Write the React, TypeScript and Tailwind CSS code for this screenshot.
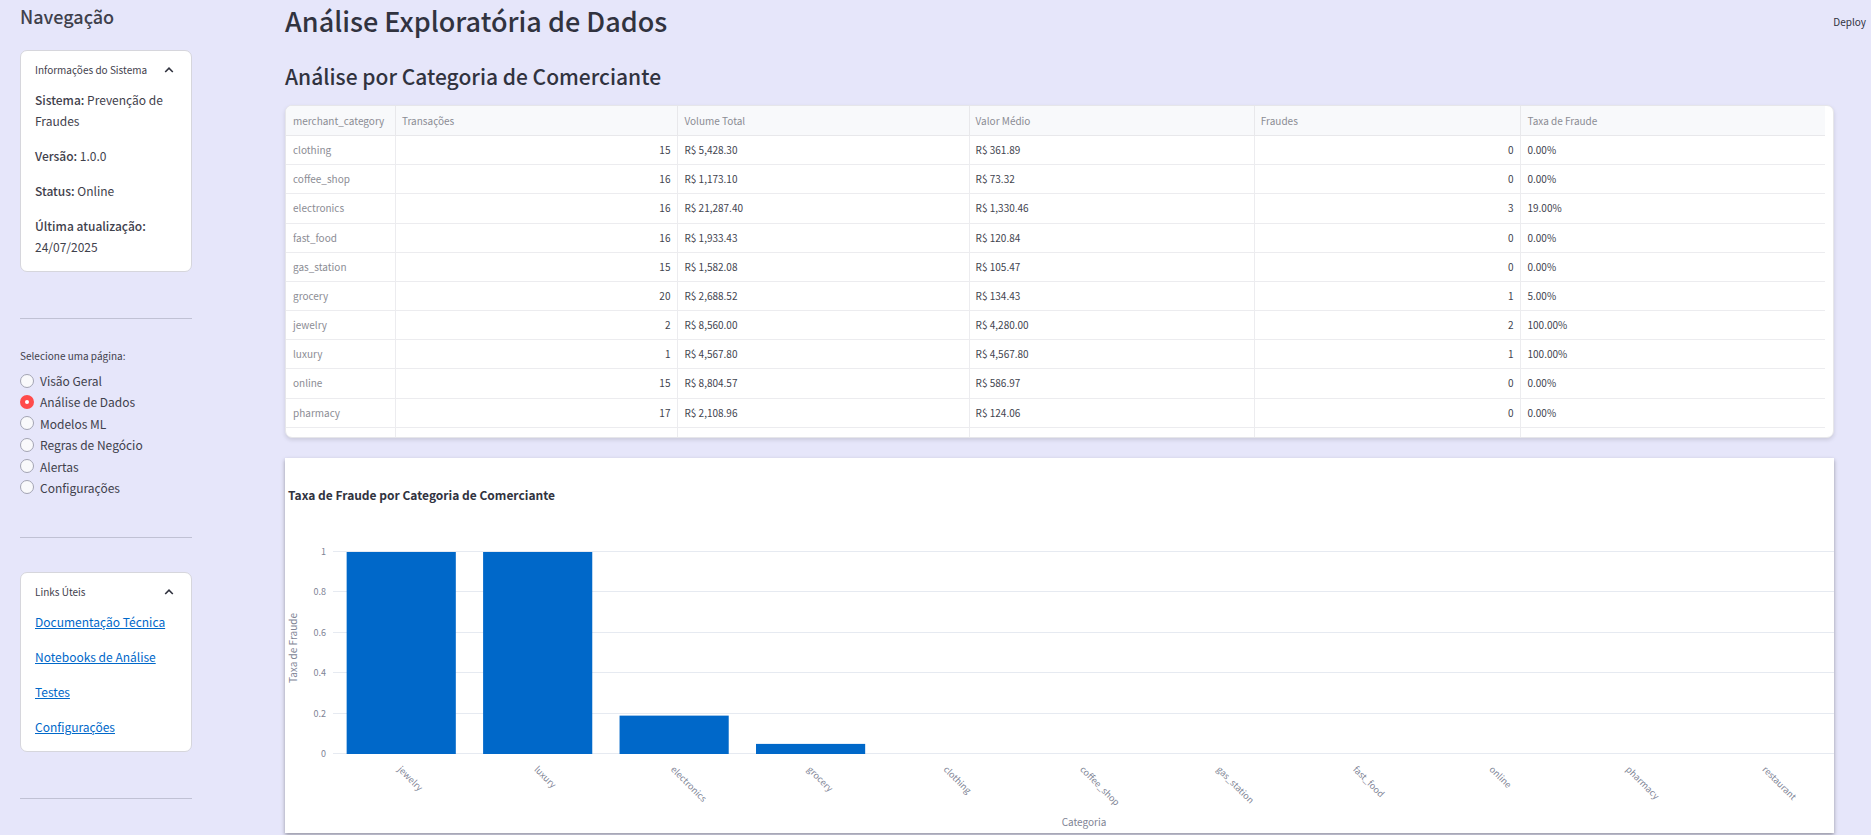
import { useState } from "react";
import type { ReactNode } from "react";

type MerchantRow = [string, number, string, string, number, string];

const columns = ["merchant_category", "Transações", "Volume Total", "Valor Médio", "Fraudes", "Taxa de Fraude"];

const rows: MerchantRow[] = [
  ["clothing", 15, "R$ 5,428.30", "R$ 361.89", 0, "0.00%"],
  ["coffee_shop", 16, "R$ 1,173.10", "R$ 73.32", 0, "0.00%"],
  ["electronics", 16, "R$ 21,287.40", "R$ 1,330.46", 3, "19.00%"],
  ["fast_food", 16, "R$ 1,933.43", "R$ 120.84", 0, "0.00%"],
  ["gas_station", 15, "R$ 1,582.08", "R$ 105.47", 0, "0.00%"],
  ["grocery", 20, "R$ 2,688.52", "R$ 134.43", 1, "5.00%"],
  ["jewelry", 2, "R$ 8,560.00", "R$ 4,280.00", 2, "100.00%"],
  ["luxury", 1, "R$ 4,567.80", "R$ 4,567.80", 1, "100.00%"],
  ["online", 15, "R$ 8,804.57", "R$ 586.97", 0, "0.00%"],
  ["pharmacy", 17, "R$ 2,108.96", "R$ 124.06", 0, "0.00%"],
];

const pages = ["Visão Geral", "Análise de Dados", "Modelos ML", "Regras de Negócio", "Alertas", "Configurações"];

const links = ["Documentação Técnica", "Notebooks de Análise", "Testes", "Configurações"];

const fraudRates: [string, number][] = [
  ["jewelry", 1],
  ["luxury", 1],
  ["electronics", 0.19],
  ["grocery", 0.05],
  ["clothing", 0],
  ["coffee_shop", 0],
  ["gas_station", 0],
  ["fast_food", 0],
  ["online", 0],
  ["pharmacy", 0],
  ["restaurant", 0],
];

function Expander({ title, children }: { title: string; children: ReactNode }) {
  const [open, setOpen] = useState(true);
  return (
    <section className="rounded-[7px] border border-[#d6d6dc] bg-white px-3.5">
      <button
        type="button"
        aria-expanded={open}
        onClick={() => setOpen(!open)}
        className="flex w-full items-center justify-between pt-2 text-[10px] leading-[22px]"
      >
        <span className="whitespace-nowrap">{title}</span>
        <svg viewBox="0 0 10 10" className="mr-[3px] size-2.5" fill="none" stroke="#31333f" strokeWidth="1.6">
          <path d="M1.2 7 5 3.2 8.8 7" />
        </svg>
      </button>
      {open && <div className="flex flex-col gap-3.5 pt-2 pb-3.5 text-[12px] leading-[21px]">{children}</div>}
    </section>
  );
}

function Sidebar() {
  const [page, setPage] = useState("Análise de Dados");
  return (
    <aside className="w-[192px] shrink-0 pl-5 text-[#3f414c]">
      <h2 className="pt-[3px] text-[18px] leading-[26px] font-medium">Navegação</h2>
      <div className="mt-[21px]">
        <Expander title="Informações do Sistema">
          <p>
            <strong className="font-medium">Sistema:</strong> Prevenção de Fraudes
          </p>
          <p>
            <strong className="font-medium">Versão:</strong> 1.0.0
          </p>
          <p>
            <strong className="font-medium">Status:</strong> Online
          </p>
          <p>
            <strong className="font-medium">Última atualização:</strong> 24/07/2025
          </p>
        </Expander>
      </div>
      <hr className="mt-[46px] border-[#c0c1d4]" />
      <fieldset className="mt-[27px]">
        <legend className="text-[10px] leading-[20px]">Selecione uma página:</legend>
        <div className="mt-1 flex h-32 flex-col justify-between text-[12px] leading-[21px]">
          {pages.map((name) => (
            <label key={name} className="flex items-center gap-1.5">
              <input
                type="radio"
                name="page"
                checked={page === name}
                onChange={() => setPage(name)}
                className="size-3.5 appearance-none rounded-full border border-[#a3a4b3] bg-[#f9f9fb] checked:border-[5px] checked:border-[#ff4b4b] checked:bg-white"
              />
              {name}
            </label>
          ))}
        </div>
      </fieldset>
      <hr className="mt-[39px] border-[#c0c1d4]" />
      <div className="mt-[34px]">
        <Expander title="Links Úteis">
          {links.map((name) => (
            <a key={name} href="#" className="text-[#0068c9] underline">
              {name}
            </a>
          ))}
        </Expander>
      </div>
      <hr className="mt-[46px] border-[#c0c1d4]" />
    </aside>
  );
}

function MerchantTable() {
  return (
    <div className="h-[333px] overflow-hidden rounded-[7px] border border-[#e6e6ea] bg-white pr-2 shadow-[0_2px_4px_rgba(0,0,0,0.12)]">
      <table className="h-[351px] w-full table-fixed border-separate border-spacing-0 text-[10px] leading-4">
        <colgroup>
          <col className="w-[7.15%]" />
          <col className="w-[18.35%]" />
          <col className="w-[18.92%]" />
          <col className="w-[18.53%]" />
          <col className="w-[17.33%]" />
          <col />
        </colgroup>
        <thead>
          <tr className="bg-[#f8f9fb] text-left text-[#8b8c94]">
            {columns.map((name) => (
              <th
                key={name}
                scope="col"
                className="h-[30px] border-r border-b border-[#e8e8eb] px-1.5 font-normal first:pl-[7px] last:border-r-0"
              >
                {name}
              </th>
            ))}
          </tr>
        </thead>
        <tbody className="text-[#42444f]">
          {rows.map((row) => (
            <tr key={row[0]}>
              {row.map((cell, i) => (
                <td
                  key={columns[i]}
                  className={
                    "h-[29px] border-r border-b border-[#ececef] px-1.5 first:pl-[7px] last:border-r-0 " +
                    (i === 0 ? "text-[#8b8c94]" : typeof cell === "number" ? "pr-[7px] text-right" : "")
                  }
                >
                  {cell}
                </td>
              ))}
            </tr>
          ))}
          <tr>
            {columns.map((name) => (
              <td key={name} className="h-[29px] border-r border-[#ececef] last:border-r-0" />
            ))}
          </tr>
        </tbody>
      </table>
    </div>
  );
}

function FraudChart() {
  const left = 48;
  const right = 1549;
  const base = 295;
  const height = 202;
  const step = (right - left) / fraudRates.length;
  const ticks = [0, 0.2, 0.4, 0.6, 0.8, 1];
  return (
    <section className="mt-5 bg-white shadow-[0_2px_4px_rgba(0,0,0,0.35)]">
      <svg viewBox="0 0 1549 375" className="block w-full" role="img" aria-label="Taxa de Fraude por Categoria de Comerciante">
        <text x="3" y="42" fontSize="12" fontWeight="700" fill="#31333f">
          Taxa de Fraude por Categoria de Comerciante
        </text>
        {ticks.map((t) => (
          <g key={t}>
            <rect x={left} y={Math.round(base - t * height)} width={right - left} height="1" fill="#e6eaf1" />
            <text x="41" y={Math.round(base - t * height) + 4} fontSize="9" textAnchor="end" fill="#808495">
              {t}
            </text>
          </g>
        ))}
        {fraudRates.map(([name, rate], i) => {
          const x = left + step * i;
          return (
            <g key={name}>
              <rect x={x + step * 0.1} y={base + 1 - rate * height} width={step * 0.8} height={rate * height} fill="#0068c9" />
              <text transform={`translate(${x + step / 2 - 4} 312) rotate(45)`} fontSize="9" fill="#808495">
                {name}
              </text>
            </g>
          );
        })}
        <text x="799" y="368" fontSize="10" textAnchor="middle" fill="#808495">
          Categoria
        </text>
        <text transform="translate(12 190) rotate(-90)" fontSize="10" textAnchor="middle" fill="#808495">
          Taxa de Fraude
        </text>
      </svg>
    </section>
  );
}

export default function App() {
  return (
    <div className="flex min-h-screen items-start bg-[#e6e6fa] font-['Noto_Sans_CJK_SC','Noto_Sans',sans-serif] text-[#31333f]">
      <Sidebar />
      <main className="relative min-w-0 flex-1 pr-[37px] pl-[93px]">
        <button type="button" className="absolute top-3 right-[5px] text-[10px] leading-5">
          Deploy
        </button>
        <h1 className="pt-[3px] text-[27px] leading-9 font-medium">Análise Exploratória de Dados</h1>
        <h3 className="mt-[22px] mb-3.5 text-[21px] leading-[30px] font-medium">Análise por Categoria de Comerciante</h3>
        <MerchantTable />
        <FraudChart />
      </main>
    </div>
  );
}
